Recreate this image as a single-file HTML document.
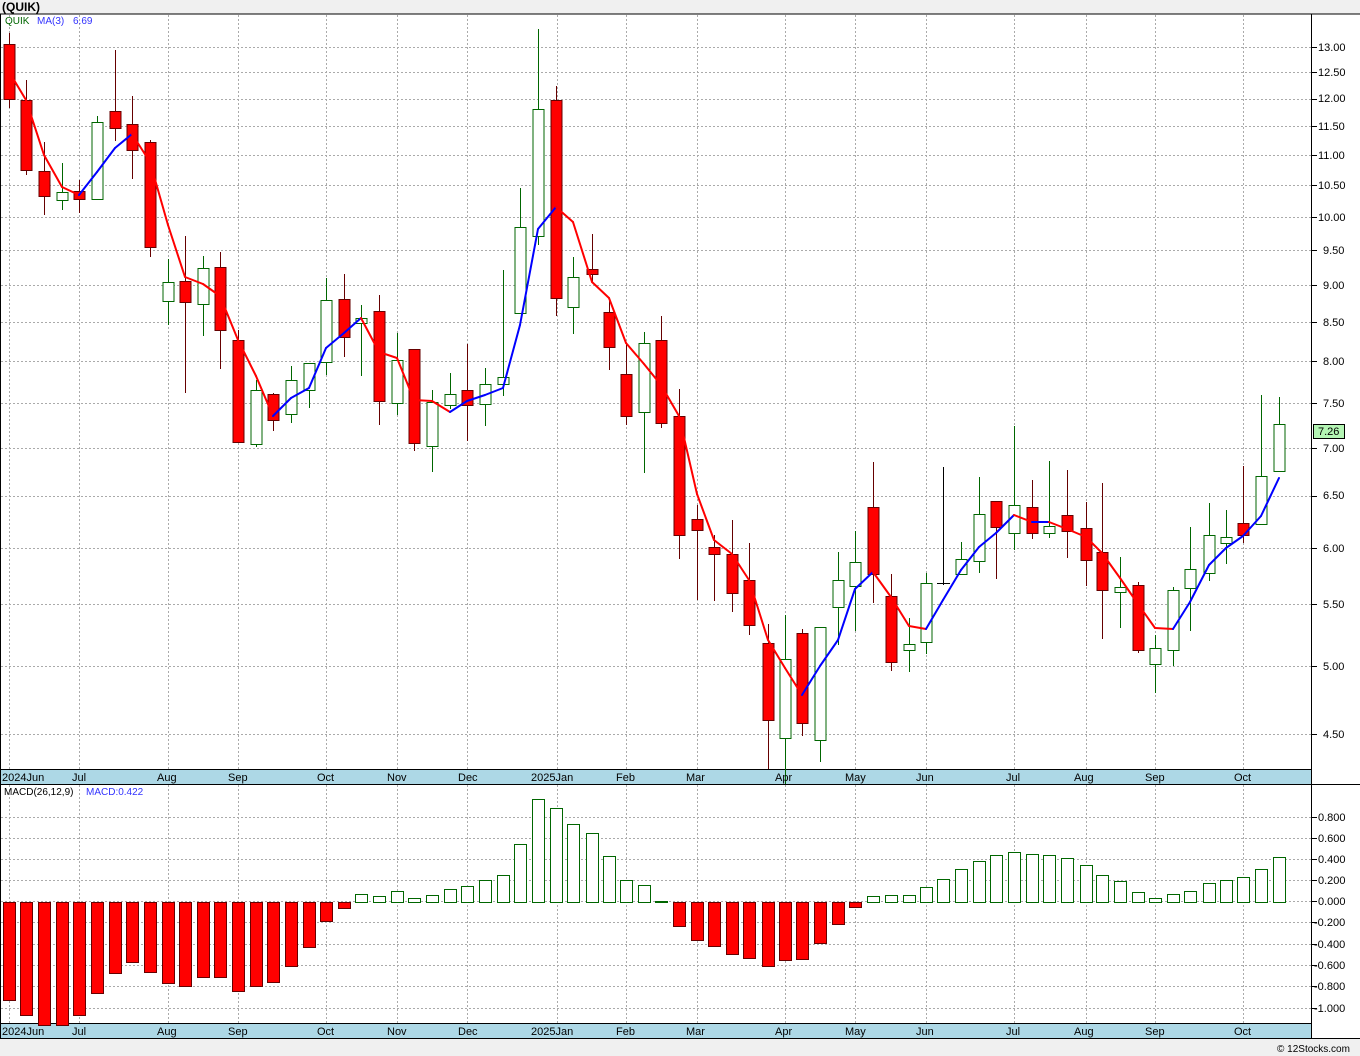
<!DOCTYPE html>
<html><head><meta charset="utf-8"><style>
html,body{margin:0;padding:0;background:#fff;width:1360px;height:1056px;overflow:hidden}
svg{display:block;font-family:"Liberation Sans",sans-serif}
</style></head><body>
<svg id="s" width="1360" height="1056" viewBox="0 0 1360 1056">
<rect x="0" y="0" width="1360" height="1056" fill="#fff"/>
<rect x="0" y="0" width="1360" height="14" fill="#f0f0f0"/>
<text x="2" y="11" font-size="12" font-weight="bold" fill="#000">(QUIK)</text>
<g id="grid"></g>
<rect x="0" y="769" width="1311" height="15" fill="#add8e6"/>
<rect x="0" y="1023" width="1311" height="15" fill="#add8e6"/>
<rect x="0" y="1038" width="1360" height="18" fill="#f0f0f0"/>
<line x1="0" y1="14" x2="1360" y2="14" stroke="#000"/>
<line x1="0.5" y1="14" x2="0.5" y2="1038" stroke="#000"/>
<line x1="1311.5" y1="14" x2="1311.5" y2="1038" stroke="#000"/>
<line x1="0" y1="769.5" x2="1311" y2="769.5" stroke="#000"/>
<line x1="0" y1="784.5" x2="1360" y2="784.5" stroke="#000"/>
<line x1="0" y1="1023.5" x2="1311" y2="1023.5" stroke="#000"/>
<line x1="0" y1="1038.5" x2="1360" y2="1038.5" stroke="#000"/>
<g id="plot"></g>
<text x="5" y="24" font-size="10" fill="#060">QUIK</text>
<text x="37" y="24" font-size="10" fill="#33f">MA(3)</text>
<text x="73" y="24" font-size="10" fill="#33f">6.69</text>
<text x="4" y="795" font-size="10" fill="#000">MACD(26,12,9)</text>
<text x="86" y="795" font-size="10" fill="#33f">MACD:0.422</text>
<g font-size="11" fill="#000">
<text x="1318" y="51">13.00</text><text x="1318" y="76">12.50</text><text x="1318" y="102">12.00</text>
<text x="1318" y="130">11.50</text><text x="1318" y="159">11.00</text><text x="1318" y="189">10.50</text>
<text x="1318" y="221">10.00</text><text x="1323" y="254">9.50</text><text x="1323" y="289">9.00</text>
<text x="1323" y="326">8.50</text><text x="1323" y="365">8.00</text><text x="1323" y="407">7.50</text>
<text x="1323" y="452">7.00</text><text x="1323" y="499">6.50</text><text x="1323" y="552">6.00</text>
<text x="1323" y="608">5.50</text><text x="1323" y="670">5.00</text><text x="1323" y="738">4.50</text>
</g>
<rect x="1313.5" y="424.5" width="31" height="14" fill="#b4f5b4" stroke="#000"/>
<text x="1318" y="435" font-size="11" fill="#000">7.26</text>
<g font-size="11" fill="#000">
<text x="1318" y="821">0.800</text><text x="1318" y="842">0.600</text><text x="1318" y="863">0.400</text>
<text x="1318" y="884">0.200</text><text x="1318" y="905">0.000</text><text x="1314" y="926">-0.200</text>
<text x="1314" y="948">-0.400</text><text x="1314" y="969">-0.600</text><text x="1314" y="990">-0.800</text>
<text x="1314" y="1012">-1.000</text>
</g>
<g font-size="11" fill="#000">
<text x="2" y="781">2024Jun</text><text x="72" y="781">Jul</text><text x="157" y="781">Aug</text><text x="228" y="781">Sep</text><text x="317" y="781">Oct</text><text x="387" y="781">Nov</text><text x="458" y="781">Dec</text><text x="531" y="781">2025Jan</text><text x="616" y="781">Feb</text><text x="686" y="781">Mar</text><text x="775" y="781">Apr</text><text x="845" y="781">May</text><text x="916" y="781">Jun</text><text x="1006" y="781">Jul</text><text x="1074" y="781">Aug</text><text x="1145" y="781">Sep</text><text x="1234" y="781">Oct</text>
</g>
<g font-size="11" fill="#000">
<text x="2" y="1035">2024Jun</text><text x="72" y="1035">Jul</text><text x="157" y="1035">Aug</text><text x="228" y="1035">Sep</text><text x="317" y="1035">Oct</text><text x="387" y="1035">Nov</text><text x="458" y="1035">Dec</text><text x="531" y="1035">2025Jan</text><text x="616" y="1035">Feb</text><text x="686" y="1035">Mar</text><text x="775" y="1035">Apr</text><text x="845" y="1035">May</text><text x="916" y="1035">Jun</text><text x="1006" y="1035">Jul</text><text x="1074" y="1035">Aug</text><text x="1145" y="1035">Sep</text><text x="1234" y="1035">Oct</text>
</g>
<text x="1277" y="1052" font-size="10" fill="#000">© 12Stocks.com</text>
</svg>
<script>
var NS="http://www.w3.org/2000/svg";
function el(p,t,a){var e=document.createElementNS(NS,t);for(var k in a)e.setAttribute(k,a[k]);p.appendChild(e);return e;}
var g=document.getElementById('grid'),p=document.getElementById('plot');
var vx=[9,79,168,238,326,397,467,557,626,697,785,855,926,1014,1086,1155,1243];
vx.forEach(function(x){el(g,'line',{x1:x+.5,y1:15,x2:x+.5,y2:769,stroke:'#aaa','stroke-dasharray':'2,2'});el(g,'line',{x1:x+.5,y1:785,x2:x+.5,y2:1023,stroke:'#aaa','stroke-dasharray':'2,2'});});
[47,72,99,126,155,185,217,250,285,322,361,403,448,496,548,604,666,734].forEach(function(y){el(g,'line',{x1:1,y1:y+.5,x2:1311,y2:y+.5,stroke:'#aaa','stroke-dasharray':'2,2'});el(g,'line',{x1:1311,y1:y+.5,x2:1317,y2:y+.5,stroke:'#000'});});
[817,838,859,880,901,922,944,965,986,1008].forEach(function(y){el(g,'line',{x1:1,y1:y+.5,x2:1311,y2:y+.5,stroke:'#aaa','stroke-dasharray':'2,2'});el(g,'line',{x1:1311,y1:y+.5,x2:1317,y2:y+.5,stroke:'#000'});});
// x,h,l,top,bot,color
var C=[[9,33,108,44,99,'r'],[26,80,175,100,170,'r'],[44,142,215,171,196,'r'],[62,163,210,192,200,'g'],[79,180,213,191,199,'r'],[97,116,199,122,199,'g'],[115,50,141,111,128,'r'],[132,96,179,124,150,'r'],[150,140,257,142,247,'r'],[168,259,325,282,301,'g'],[185,236,393,281,302,'r'],[203,256,336,268,304,'g'],[220,252,369,267,330,'r'],[238,330,442,340,442,'r'],[256,380,447,390,444,'g'],[273,393,431,394,420,'r'],[291,366,423,380,414,'g'],[309,365,408,363,390,'g'],[326,278,375,300,362,'g'],[344,274,357,299,337,'r'],[361,305,376,318,323,'g'],[379,295,425,311,401,'r'],[397,333,415,360,403,'g'],[414,349,451,349,443,'r'],[432,390,472,402,446,'g'],[450,373,409,394,405,'g'],[467,344,441,390,405,'r'],[485,368,426,384,404,'g'],[503,270,396,377,384,'g'],[520,188,313,227,313,'g'],[538,29,245,109,236,'g'],[556,86,316,100,298,'r'],[573,257,334,277,307,'g'],[592,234,282,269,274,'r'],[609,300,370,312,347,'r'],[626,344,425,374,416,'r'],[644,332,473,343,412,'g'],[661,316,428,340,423,'r'],[679,389,559,416,535,'r'],[697,505,600,519,530,'r'],[714,535,601,547,554,'r'],[732,520,612,554,593,'r'],[749,543,635,580,625,'r'],[768,624,769,643,720,'r'],[785,615,784,659,738,'g'],[802,629,736,633,723,'r'],[820,627,762,627,740,'g'],[838,552,645,580,607,'g'],[855,531,631,562,586,'g'],[873,462,603,507,574,'r'],[891,574,671,596,662,'r'],[909,618,672,644,650,'g'],[926,573,654,583,642,'g'],[943,467,585,583,583,'k'],[961,542,574,559,574,'g'],[979,477,573,514,561,'g'],[996,501,579,501,527,'r'],[1014,426,550,505,533,'g'],[1032,480,539,507,533,'r'],[1049,461,538,526,533,'g'],[1067,470,558,515,531,'r'],[1086,502,586,528,560,'r'],[1102,483,639,552,590,'r'],[1120,557,628,587,592,'g'],[1138,582,653,585,650,'r'],[1155,635,693,648,664,'g'],[1173,587,666,590,650,'g'],[1190,527,631,569,588,'g'],[1209,503,581,535,573,'g'],[1226,510,564,537,543,'g'],[1243,466,543,523,535,'r'],[1261,395,524,476,524,'g'],[1279,397,471,424,471,'g']];
C.forEach(function(c){var x=c[0],col=c[5];var wc=col=='r'?'#600':col=='g'?'#060':'#000';
el(p,'line',{x1:x+.5,y1:c[1],x2:x+.5,y2:c[2],stroke:wc});
if(col=='k'){el(p,'line',{x1:x-6,y1:c[3]+.5,x2:x+7,y2:c[3]+.5,stroke:'#000'});return;}
el(p,'rect',{x:x-5,y:c[3]+.5,width:11,height:Math.max(1,c[4]-c[3]),fill:col=='r'?'#f00':'#fff',stroke:wc});});
var M=[[14,80],[26,100],[44,155],[62,187],[79,195],[97,172],[115,148],[132,134],[150,162],[168,225],[185,277],[203,284],[220,296],[238,340],[256,376],[273,416],[291,398],[309,388],[326,348],[344,333],[361,318],[379,352],[397,358],[414,400],[432,401],[450,412],[467,401],[485,395],[503,388],[520,325],[538,229],[556,207],[573,222],[592,282],[609,298],[626,343],[644,364],[661,385],[679,416],[697,494],[714,540],[732,554],[749,580],[768,640],[785,668],[802,695],[820,666],[838,640],[855,589],[873,572],[891,597],[909,626],[926,629],[943,600],[961,570],[979,547],[996,533],[1014,515],[1032,522],[1049,522],[1067,529],[1086,537],[1102,553],[1120,578],[1138,604],[1155,628],[1173,629],[1190,602],[1209,565],[1226,548],[1243,536],[1261,516],[1279,478]];
for(var i=1;i<M.length;i++){var a=M[i-1],b=M[i];var up=b[1]<a[1]||(i==59);
el(p,'line',{x1:a[0],y1:a[1],x2:b[0],y2:b[1],stroke:up?'#00f':'#f00','stroke-width':2,'stroke-linecap':'round'});}
var H=[1000,1015,1025,1025,1015,993,973,962,972,983,986,977,977,991,986,982,966,947,921,908,894,896,891,898,895,889,886,880,875,844,799,808,824,833,856,880,885,901,926,940,946,954,958,966,960,959,943,924,907,896,895,895,887,879,869,861,855,852,854,855,858,865,875,881,892,898,894,891,883,880,877,869,857];
H.forEach(function(h,i){var x=C[i][0];var neg=h>902;var y0=neg?902:h,y1=neg?h:902;
el(p,'rect',{x:x-5.5,y:y0+.5,width:12,height:Math.max(1,y1-y0),fill:neg?'#f00':'#fff',stroke:neg?'#600':'#060'});});
</script>
</body></html>
